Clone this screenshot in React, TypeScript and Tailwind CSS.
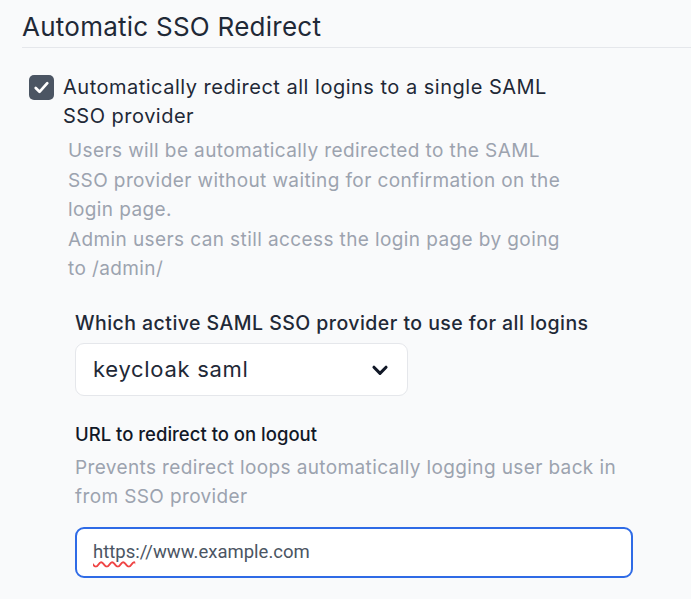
import { useState } from "react";

export default function App() {
	const [autoRedirect, setAutoRedirect] = useState(true);
	const [provider, setProvider] = useState("keycloak saml");
	const [logoutUrl, setLogoutUrl] = useState("https://www.example.com");

	return (
		<div
			className="min-h-screen w-full bg-[#f9fafb] pl-[22px] pt-[10px] text-[#1f2937]"
			style={{ fontFamily: "Inter, 'Noto Sans', sans-serif" }}
		>
			<h2 className="border-b border-[#e5e7eb] pb-[4px] text-[26px] font-normal leading-[33px] tracking-[0.25px]">
				Automatic SSO Redirect
			</h2>

			{/* Checkbox row */}
			<label className="mt-[25px] flex items-start gap-[9px] pl-[7px]">
				<button
					type="button"
					onClick={() => setAutoRedirect(!autoRedirect)}
					className="mt-[2px] flex h-[25px] w-[25px] shrink-0 items-center justify-center rounded-[5px] bg-[#4b5563]"
				>
					{autoRedirect && (
						<svg viewBox="0 0 20 20" className="h-[21px] w-[21px]" fill="none">
							<path
								d="M4.5 10.5l3.6 3.6 7.4-8.2"
								stroke="white"
								strokeWidth="2.6"
								strokeLinecap="round"
								strokeLinejoin="round"
							/>
						</svg>
					)}
				</button>
				<span className="w-[512px] text-[20px] leading-[29px] tracking-[0.5px] text-[#1f2937]">
					Automatically redirect all logins to a single SAML SSO provider
				</span>
			</label>

			<div className="mt-[5px] w-[551px] pl-[46px] text-[19px] leading-[29.5px] tracking-[0.4px] text-[#9ca3af]">
				<p>
					Users will be automatically redirected to the SAML SSO provider without waiting for
					confirmation on the login page.
				</p>
				<p>Admin users can still access the login page by going to /admin/</p>
			</div>

			{/* Provider select */}
			<div className="mt-[25px] pl-[53px]">
				<div className="text-[19.5px] font-medium leading-[29px] tracking-[0.45px] text-[#1f2937]">
					Which active SAML SSO provider to use for all logins
				</div>
				<div className="relative mt-[5px] w-[333px]">
					<select
						value={provider}
						onChange={(e) => setProvider(e.target.value)}
						className="h-[53px] w-full appearance-none rounded-[9px] border border-[#e5e7eb] bg-white pl-[17px] text-[22px] tracking-[0.7px] text-[#1f2937] outline-none"
					>
						<option>keycloak saml</option>
					</select>
					<svg
						viewBox="0 0 20 20"
						className="pointer-events-none absolute right-[17px] top-[16px] h-[22px] w-[22px]"
						fill="none"
					>
						<path
							d="M4.5 7.5l5.5 5.5 5.5-5.5"
							stroke="#111827"
							strokeWidth="2.8"
							strokeLinecap="round"
							strokeLinejoin="round"
						/>
					</svg>
				</div>

				{/* Logout URL */}
				<div className="mt-[24px] text-[18.5px] font-medium leading-[29px] text-[#111827]">
					URL to redirect to on logout
				</div>
				<div className="mt-[4px] w-[560px] text-[19px] leading-[29px] tracking-[0.38px] text-[#9ca3af]">
					Prevents redirect loops automatically logging user back in from SSO provider
				</div>
				<div className="relative mt-[16px] w-[558px]">
					<input
						value={logoutUrl}
						onChange={(e) => setLogoutUrl(e.target.value)}
						className="h-[51px] w-full rounded-[9px] border-2 border-[#2f6be6] bg-white pl-[16px] text-[18.5px] text-[#4b5563] outline-none"
						style={{ fontFamily: "Roboto, 'Liberation Sans', sans-serif" }}
					/>
					<span
						className="pointer-events-none absolute left-[18px] top-[13px] text-[18.5px] leading-[22px] text-transparent underline decoration-[#ef4444] decoration-wavy decoration-[1.5px] underline-offset-[4px]"
						style={{ fontFamily: "Roboto, 'Liberation Sans', sans-serif" }}
					>
						https
					</span>
				</div>
			</div>
		</div>
	);
}
